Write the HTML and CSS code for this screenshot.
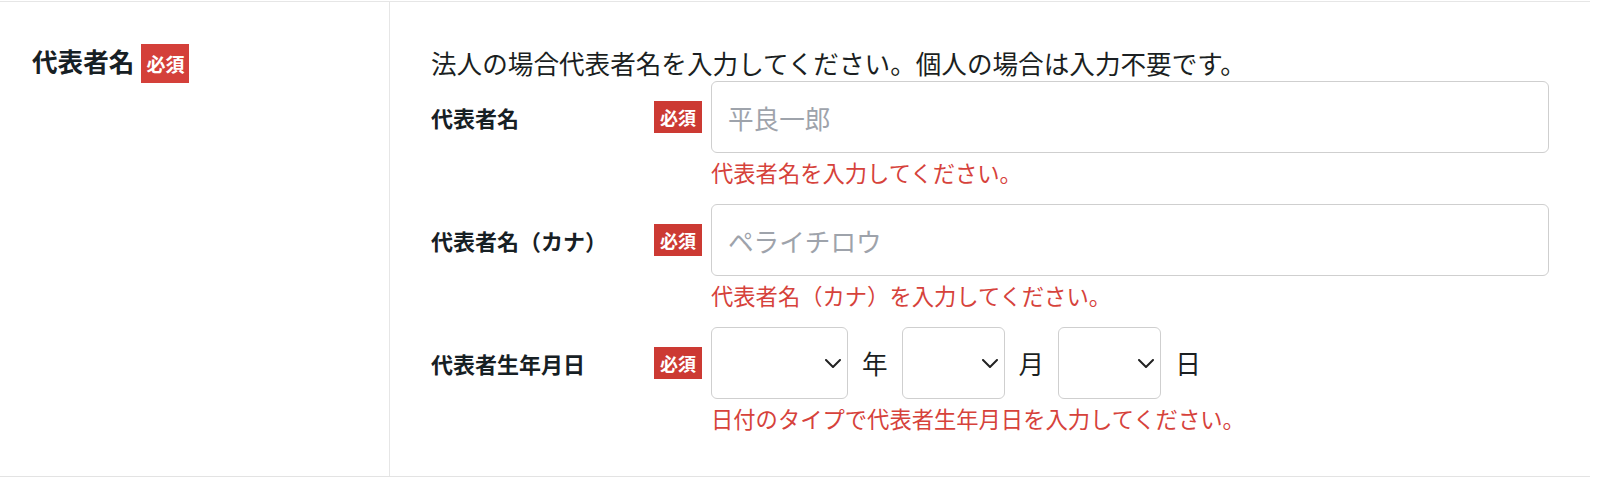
FILE: index.html
```html
<!DOCTYPE html>
<html lang="ja">
<head>
<meta charset="utf-8">
<title>代表者名</title>
<link rel="stylesheet" href="styles.css">
</head>
<body>
<div class="form-table">
  <div class="row">
    <div class="head">
      <span class="head-label">代表者名</span>
      <span class="badge badge-lg">必須</span>
    </div>
    <div class="body">
      <p class="desc">法人の場合代表者名を入力してください。個人の場合は入力不要です。</p>

      <div class="field">
        <div class="field-label">代表者名</div>
        <span class="badge">必須</span>
        <div class="control">
          <input class="text-input" type="text" placeholder="平良一郎">
        </div>
        <p class="error">代表者名を入力してください。</p>
      </div>

      <div class="field">
        <div class="field-label">代表者名（カナ）</div>
        <span class="badge">必須</span>
        <div class="control">
          <input class="text-input" type="text" placeholder="ペライチロウ">
        </div>
        <p class="error">代表者名（カナ）を入力してください。</p>
      </div>

      <div class="field">
        <div class="field-label">代表者生年月日</div>
        <span class="badge">必須</span>
        <div class="control date-row">
          <div class="select-wrap select-year">
            <select class="select"><option></option></select>
            <svg class="chevron" width="16" height="9" viewBox="0 0 16 9"><path d="M1 1l7 7 7-7" fill="none" stroke="#222" stroke-width="2" stroke-linecap="round" stroke-linejoin="round"/></svg>
          </div>
          <span class="unit">年</span>
          <div class="select-wrap select-small">
            <select class="select"><option></option></select>
            <svg class="chevron" width="16" height="9" viewBox="0 0 16 9"><path d="M1 1l7 7 7-7" fill="none" stroke="#222" stroke-width="2" stroke-linecap="round" stroke-linejoin="round"/></svg>
          </div>
          <span class="unit">月</span>
          <div class="select-wrap select-small">
            <select class="select"><option></option></select>
            <svg class="chevron" width="16" height="9" viewBox="0 0 16 9"><path d="M1 1l7 7 7-7" fill="none" stroke="#222" stroke-width="2" stroke-linecap="round" stroke-linejoin="round"/></svg>
          </div>
          <span class="unit">日</span>
        </div>
        <p class="error">日付のタイプで代表者生年月日を入力してください。</p>
      </div>
    </div>
  </div>
</div>
</body>
</html>
```
FILE: styles.css
```css
* {
  box-sizing: border-box;
}

html, body {
  margin: 0;
  padding: 0;
  background: #ffffff;
}

body {
  font-family: "Noto Sans CJK JP", "Noto Sans", sans-serif;
  color: #1b1f22;
}

.form-table {
  width: 1590px;
  margin-top: 1px;
  border-top: 1px solid #e6e6e6;
  border-bottom: 1px solid #e3e3e3;
}

.row {
  display: grid;
  grid-template-columns: 390px 1fr;
}

.head {
  border-right: 1px solid #e6e6e6;
  padding: 42px 0 0 32px;
  display: flex;
  align-items: flex-start;
  gap: 7px;
}

.head-label {
  font-size: 25.6px;
  line-height: 34px;
  font-weight: 700;
  color: #172024;
}

.badge {
  display: inline-flex;
  align-items: center;
  justify-content: center;
  width: 48px;
  height: 32px;
  background: #cc3a33;
  color: #ffffff;
  font-size: 18px;
  font-weight: 700;
  line-height: 1;
  letter-spacing: 0;
}

.badge-lg {
  height: 39px;
  background: #d4403a;
  font-size: 19px;
}

.body {
  padding: 42px 41px 43px 41px;
}

.desc {
  margin: 0;
  font-size: 25.6px;
  line-height: 37px;
  color: #1b1f22;
}

.field {
  display: grid;
  grid-template-columns: 223px 48px 1fr;
  column-gap: 0;
  align-items: center;
  margin-bottom: 17px;
}

.field:last-child {
  margin-bottom: 0;
}

.field-label {
  font-size: 22px;
  font-weight: 700;
  color: #172024;
  line-height: 30px;
}

.control {
  margin-left: 9px;
}

.text-input {
  display: block;
  width: 100%;
  height: 72px;
  border: 1px solid #cfcfcf;
  border-radius: 6px;
  padding: 0 16px;
  font-family: inherit;
  font-size: 25.6px;
  color: #1b1f22;
  background: #ffffff;
  outline: none;
}

.text-input::placeholder {
  color: #9ea3ab;
}

.error {
  grid-column: 3;
  margin: 4px 0 0 9px;
  font-size: 22.3px;
  line-height: 30px;
  color: #d6423b;
}

.date-row {
  display: flex;
  align-items: center;
  gap: 14px;
}

.select-wrap {
  position: relative;
  height: 72px;
}

.select-year {
  width: 137px;
}

.select-small {
  width: 103px;
}

.select {
  appearance: none;
  -webkit-appearance: none;
  width: 100%;
  height: 100%;
  border: 1px solid #cfcfcf;
  border-radius: 6px;
  background: #ffffff;
  font-family: inherit;
  font-size: 25.6px;
  padding: 0 30px 0 14px;
  outline: none;
}

.chevron {
  position: absolute;
  right: 7px;
  top: 32px;
  pointer-events: none;
}

.unit {
  font-size: 25.6px;
  line-height: 1;
  color: #1b1f22;
}
```
